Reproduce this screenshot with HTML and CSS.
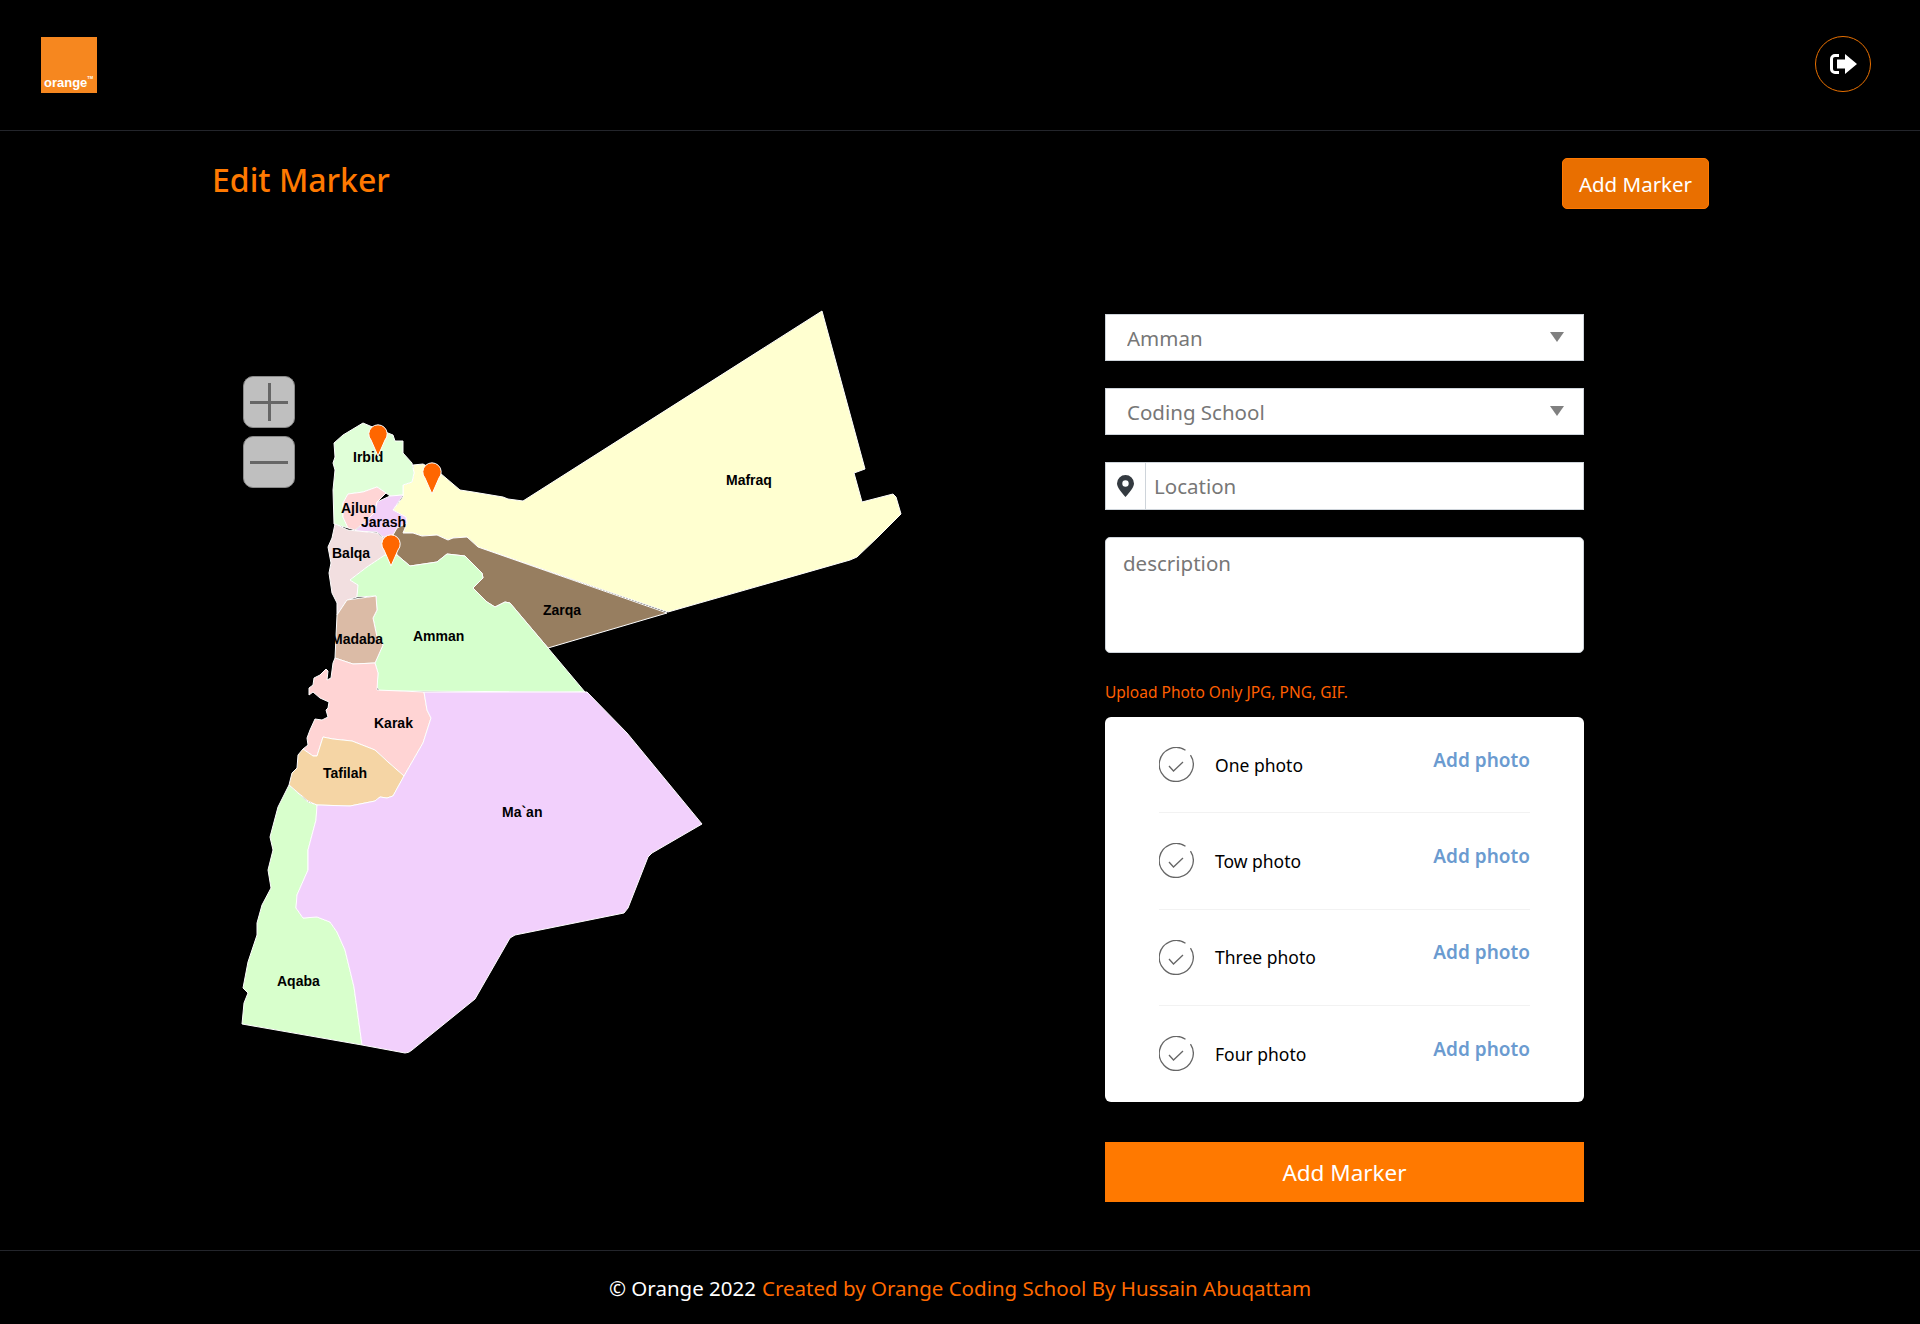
FILE: index.html
```html
<!DOCTYPE HTML>
<html>
<head>
<title>Edit Marker</title>
<link rel="stylesheet" href="styles.css">
</head>
<body>

<svg class="defs" width="0" height="0">
  <symbol id="checkCircle" viewBox="0 0 35 35">
    <path d="M26.5 3.2A17 17 0 1 0 31.5 8.2" fill="none" stroke="#666" stroke-width="1.300"/>
    <path d="M10 19L14.5 24L24 15" fill="none" stroke="#666" stroke-width="1.300"/>
  </symbol>
</svg>

<header class="topBar">
  <div class="logo">
    <span class="logoText">orange<sup class="logoTm">TM</sup></span>
  </div>
  <button class="logoutButton">
    <svg width="27" height="20" viewBox="0 0 27 20">
      <path d="M9 1.5H5A3.500 3.500 0 0 0 1.500 5V15A3.500 3.500 0 0 0 5 18.500H9" fill="none" stroke="#fff" stroke-width="3"/>
      <path d="M7 5.500H15V0L27 10L15 20V14.500H7Z" fill="#fff"/>
    </svg>
  </button>
</header>

<div class="titleRow">
  <h1 class="pageTitle">Edit Marker</h1>
  <button class="addMarkerSmall">Add Marker</button>
</div>

<main class="content">
  <div class="mapWrap">
    <svg class="jordanMap" width="680" height="770" viewBox="232 300 680 770">
      <g stroke="#fff" stroke-width="1" stroke-linejoin="round">
        <path fill="#ffffd0" d="M822 311L865 469L854 473L862 502L893 494L896 497L901 514L878 537L857 557L850 560L668 612L478 547L467 537L453 538L448 540L437 535L422 536L413 533L403 533L407 523L406 517L393 510L403 497L403 485L412 482L414 473L413 465L423 464L440 473L460 490L473 492L503 497L508 499L523 501Z"/>
        <path fill="#e0ffd8" d="M334 443L343 435L363 423L370 426L393 435L395 441L403 441L403 453L412 463L414 473L412 482L403 485L403 495L390 496L386 493L377 487L363 492L348 494L343 503L343 517L348 528L334 524L333 490L335 470L333 463L335 457Z"/>
        <path fill="#ffd5d5" d="M348 494L363 492L377 487L386 493L377 502L375 512L367 520L355 530L348 528L343 517L343 503Z"/>
        <path fill="#f2d0f8" d="M377 502L390 496L403 495L393 510L406 517L407 523L397 528L398 535L383 537L377 532L355 531L367 520L375 512Z"/>
        <path fill="#f2dfe0" d="M335 524L348 530L377 533L383 538L393 535L397 555L385 555L367 567L350 580L358 585L357 597L347 600L337 615L337 603L332 593L329 573L331 563L328 547L332 538Z"/>
        <path fill="#977e60" d="M397 528L407 523L403 533L413 533L422 536L437 535L448 540L453 538L467 537L478 547L667 613L548 648L510 603L505 602L495 607L487 602L473 588L483 578L482 573L465 556L447 554L437 562L410 566L397 555L393 535Z"/>
        <path fill="#d5ffcc" d="M385 555L397 555L410 566L437 562L447 554L465 556L482 573L483 578L473 588L487 602L495 607L505 602L510 603L548 648L585 692L380 691L377 687L378 673L375 663L383 645L377 637L373 618L377 610L376 596L357 597L358 585L350 580L367 567Z"/>
        <path fill="#dbbba6" d="M347 600L376 596L377 610L373 618L377 637L383 645L375 663L353 664L335 658L337 615Z"/>
        <path fill="#ffd4d4" d="M335 658L353 664L375 663L378 673L377 690L424 692L427 710L431 718L423 743L404 776L388 762L375 750L352 741L333 739L323 737L317 756L313 756L303 749L308 745L307 738L310 730L315 719L322 720L328 717L326 710L328 708L329 702L320 698L313 692L309 695L309 688L313 685L314 678L320 675L326 669L328 671L327 680L331 678L333 663Z"/>
        <path fill="#f5d5a5" d="M323 737L333 739L352 741L375 750L388 762L404 776L393 796L387 798L380 797L375 801L350 806L317 805L308 801L289 785L292 773L297 768L298 755L303 749L313 756L317 756Z"/>
        <path fill="#d8ffcc" d="M289 785L308 802L317 805L316 820L308 850L308 870L297 895L296 908L303 918L317 917L330 922L337 932L345 950L354 987L362 1045L242 1024L244 1003L248 993L243 988L248 962L257 935L257 923L262 905L271 888L268 870L273 850L270 837L278 807Z"/>
        <path fill="#f2d0fc" d="M424 692L587 692L627 733L702 824L652 853L648 857L628 908L624 913L515 935L510 938L475 999L412 1050Q409 1053 405 1053L362 1045L354 987L345 950L337 932L330 922L317 917L303 918L296 908L297 895L308 870L308 850L316 820L317 805L350 806L375 801L380 797L387 798L393 796L404 776L423 743L431 718L427 710Z"/>
      </g>
      <g class="mapLabels">
        <text x="353" y="462">Irbid</text>
        <text x="341" y="513">Ajlun</text>
        <text x="361" y="527">Jarash</text>
        <text x="332" y="558">Balqa</text>
        <text x="331" y="644">Madaba</text>
        <text x="413" y="641">Amman</text>
        <text x="543" y="615">Zarqa</text>
        <text x="726" y="485">Mafraq</text>
        <text x="374" y="728">Karak</text>
        <text x="323" y="778">Tafilah</text>
        <text x="502" y="817">Ma`an</text>
        <text x="277" y="986">Aqaba</text>
      </g>
      <g fill="#ff6600" stroke="#fff" stroke-width="1">
        <path d="M378 456L371 440A9.200 9.200 0 1 1 385 440Z"/>
        <path d="M432 494L425 478A9.200 9.200 0 1 1 439 478Z"/>
        <path d="M391 566L384 550A9.200 9.200 0 1 1 398 550Z"/>
      </g>
    </svg>
    <button class="zoomButton zoomIn"></button>
    <button class="zoomButton zoomOut"></button>
  </div>

  <form class="markerForm">
    <div class="selectBox">
      <select class="formSelect"><option>Amman</option></select>
    </div>
    <div class="selectBox">
      <select class="formSelect"><option>Coding School</option></select>
    </div>
    <div class="locationGroup">
      <span class="locationIcon">
        <svg width="17" height="22" viewBox="0 0 17 22">
          <path fill-rule="evenodd" fill="#343a40" d="M8.500 0A8.500 8.500 0 0 1 17 8.500C17 12.500 12 18 8.500 22C5 18 0 12.500 0 8.500A8.500 8.500 0 0 1 8.500 0ZM8.500 5.300A3.200 3.200 0 1 0 8.500 11.700A3.200 3.200 0 1 0 8.500 5.300Z"/>
        </svg>
      </span>
      <input class="locationInput" type="text" placeholder="Location">
    </div>
    <textarea class="descInput" placeholder="description"></textarea>
    <p class="uploadNote">Upload Photo Only JPG, PNG, GIF.</p>

    <div class="photoCard">
      <div class="photoRow">
        <svg class="checkIcon"><use href="#checkCircle"/></svg>
        <span class="photoName">One photo</span>
        <a class="photoLink">Add photo</a>
      </div>
      <div class="photoRow">
        <svg class="checkIcon"><use href="#checkCircle"/></svg>
        <span class="photoName">Tow photo</span>
        <a class="photoLink">Add photo</a>
      </div>
      <div class="photoRow">
        <svg class="checkIcon"><use href="#checkCircle"/></svg>
        <span class="photoName">Three photo</span>
        <a class="photoLink">Add photo</a>
      </div>
      <div class="photoRow">
        <svg class="checkIcon"><use href="#checkCircle"/></svg>
        <span class="photoName">Four photo</span>
        <a class="photoLink">Add photo</a>
      </div>
    </div>

    <button class="addMarkerBig" type="button">Add Marker</button>
  </form>
</main>

<footer class="pageFooter">
  &copy; Orange 2022 <span class="footerOrange">Created by Orange Coding School By Hussain Abuqattam</span>
</footer>

</body>
</html>
```

FILE: styles.css
```css
* {
  box-sizing: border-box;
}

body {
  margin: 0;
  background: #000;
  font-family: "Noto Sans", "Open Sans", sans-serif;
  color: #fff;
}

.defs {
  display: block;
  height: 0;
}

.topBar {
  height: 131px;
  border-bottom: 1px solid #23252b;
  padding: 36px 49px 0 41px;
  display: flex;
  justify-content: space-between;
  align-items: flex-start;
}

.logo {
  width: 56px;
  height: 56px;
  margin-top: 1px;
  background: #f6871f;
  display: flex;
  align-items: flex-end;
  padding: 0 0 3px 3px;
}

.logoText {
  font-family: "Liberation Sans", sans-serif;
  font-weight: bold;
  font-size: 13px;
  line-height: 14px;
  color: #fff;
}

.logoTm {
  font-size: 4px;
  line-height: 0;
  vertical-align: 8px;
}

.logoutButton {
  width: 56px;
  height: 56px;
  padding: 0;
  background: none;
  border: 1px solid #e87000;
  border-radius: 50%;
  display: flex;
  align-items: center;
  justify-content: center;
}

.titleRow {
  height: 169px;
  display: flex;
  justify-content: space-between;
  align-items: flex-start;
  padding: 27px 211px 0 212px;
}

.pageTitle {
  margin: 2px 0 0;
  font-size: 32px;
  font-weight: 500;
  line-height: 40px;
  color: #ff7900;
}

.addMarkerSmall {
  width: 147px;
  height: 51px;
  background: #e96f00;
  border: 1px solid #ff7900;
  border-radius: 5px;
  color: #fff;
  font-family: inherit;
  font-size: 20.500px;
}

.content {
  display: flex;
  gap: 193px;
  padding: 0 0 48px 232px;
}

.mapWrap {
  position: relative;
  width: 680px;
  height: 770px;
}

.jordanMap {
  display: block;
}

.mapLabels {
  font-family: "Liberation Sans", sans-serif;
  font-weight: bold;
  font-size: 14px;
  fill: #000;
}

.zoomButton {
  position: absolute;
  left: 11px;
  width: 52px;
  height: 52px;
  padding: 0;
  background: #bfbfbf;
  border: 1px solid #8a8a8a;
  border-radius: 10px;
}

.zoomIn {
  top: 76px;
}

.zoomOut {
  top: 136px;
}

.zoomButton::before {
  content: "";
  position: absolute;
  left: 6px;
  right: 6px;
  top: 24px;
  height: 3px;
  background: #666;
}

.zoomIn::after {
  content: "";
  position: absolute;
  top: 6px;
  bottom: 6px;
  left: 24px;
  width: 3px;
  background: #666;
}

.markerForm {
  width: 479px;
  margin-top: 14px;
  display: flex;
  flex-direction: column;
}

.selectBox {
  position: relative;
  height: 47px;
  margin-bottom: 27px;
}

.selectBox::after {
  content: "";
  position: absolute;
  right: 20px;
  top: 18px;
  border-left: 7px solid transparent;
  border-right: 7px solid transparent;
  border-top: 10px solid #808080;
}

.formSelect {
  width: 100%;
  height: 100%;
  appearance: none;
  background: #fff;
  border: 1px solid #ced4da;
  border-radius: 0;
  padding: 0 0 0 21px;
  font-family: inherit;
  font-size: 20.500px;
  color: #777;
}

.locationGroup {
  height: 48px;
  margin-bottom: 27px;
  display: flex;
  background: #fff;
  border: 1px solid #ced4da;
}

.locationIcon {
  width: 40px;
  border-right: 1px solid #ced4da;
  display: flex;
  align-items: center;
  justify-content: center;
}

.locationInput {
  flex: 1;
  min-width: 0;
  border: none;
  outline: none;
  padding: 0 0 0 8px;
  font-family: inherit;
  font-size: 20.500px;
  color: #777;
}

.locationInput::placeholder,
.descInput::placeholder {
  color: #777;
  opacity: 1;
}

.descInput {
  display: block;
  width: 100%;
  height: 116px;
  resize: none;
  background: #fff;
  border: 1px solid #ced4da;
  border-radius: 5px;
  padding: 10px 17px;
  font-family: inherit;
  font-size: 20.500px;
  line-height: 30px;
  color: #777;
  outline: none;
}

.uploadNote {
  margin: 29px 0 15px;
  font-size: 15.500px;
  line-height: 20px;
  color: #ff5f00;
}

.photoCard {
  height: 385px;
  background: #fff;
  border-radius: 6px;
  padding: 0 54px;
  display: grid;
  grid-template-rows: repeat(4, 1fr);
  color: #000;
}

.photoRow {
  display: flex;
  align-items: center;
  border-bottom: 1px solid #f2f2f2;
}

.photoRow:last-child {
  border-bottom: none;
}

.checkIcon {
  width: 35px;
  height: 35px;
  flex: none;
  margin-right: 21px;
}

.photoName {
  flex: 1;
  font-size: 17.500px;
}

.photoLink {
  margin-bottom: 10px;
  font-size: 19px;
  font-weight: 600;
  color: #6b9bd0;
}

.addMarkerBig {
  height: 60px;
  margin-top: 40px;
  background: #ff7900;
  border: none;
  color: #fff;
  font-family: inherit;
  font-size: 22.500px;
}

.pageFooter {
  height: 74px;
  border-top: 1px solid #23252b;
  display: flex;
  align-items: center;
  justify-content: center;
  gap: 6px;
  font-size: 20.500px;
  color: #fff;
}

.footerOrange {
  color: #ff6a00;
}
```
